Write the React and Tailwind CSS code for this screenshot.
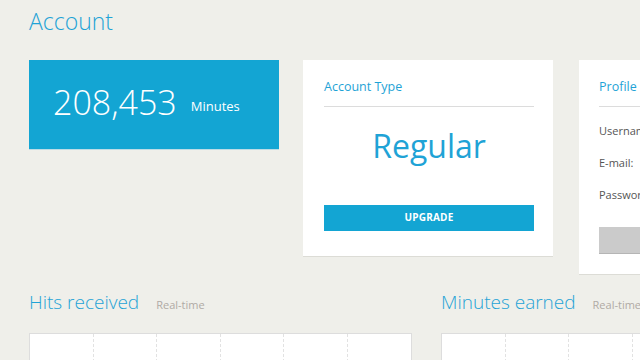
export default function App() {
  const cols = [0, 1, 2, 3, 4, 5];
  return (
    <div className="w-[640px] h-[360px] overflow-hidden bg-[#efefea] font-['Open_Sans',sans-serif]">
      <div className="w-[900px] pl-[29px]">
        <h1 className="pt-[3px] h-[60px] text-[23px] leading-[36px] font-light text-[#1fa3d6]">Account</h1>

        <div className="flex items-start">
          <div className="w-[250px] h-[89px] bg-[#13a5d3] shadow-[0_1px_0_#bcdce6] flex items-center pl-[24px] pb-[6px] text-white">
            <span className="text-[34px] font-light leading-none">208,453</span>
            <span className="ml-[14px] mt-[10px] text-[13px]">Minutes</span>
          </div>

          <div className="ml-[24px] w-[250px] bg-white shadow-[0_1px_0_#dcdcd6] pl-[21px] pr-[19px] pt-[17px] pb-[25px]">
            <div className="text-[12.5px] leading-[20px] text-[#1fa3d6] pb-[9px] border-b border-[#dcdcdc]">Account Type</div>
            <div className="text-center text-[32px] leading-[44px] text-[#1fa3d6] pt-[17px] pb-[35px]">Regular</div>
            <button className="w-full h-[26px] bg-[#13a5d3] text-white text-[10px] font-bold tracking-[0.2px]">UPGRADE</button>
          </div>

          <div className="ml-[26px] w-[250px] bg-white shadow-[0_1px_0_#dcdcd6] pl-[20px] pr-[19px] pt-[17px] pb-[21px]">
            <div className="text-[12.5px] leading-[20px] text-[#1fa3d6] pb-[9px] border-b border-[#dcdcdc]">Profile</div>
            <div className="pt-[15px] text-[11px] text-[#555] flex flex-col gap-[15px]">
              <div className="leading-[17px]">Username:</div>
              <div className="leading-[17px]">E-mail:</div>
              <div className="leading-[17px]">Password:</div>
            </div>
            <div className="mt-[24px] h-[26px] bg-[#cbcbcb] shadow-[0_1px_0_#b5b5b5]" />
          </div>
        </div>

        <div className="flex gap-[29px] mt-[9px]">
          <div className="w-[383px]">
            <div className="flex items-baseline h-[50px] pt-[5px]">
              <span className="text-[19px] font-light text-[#1fa3d6]">Hits received</span>
              <span className="ml-[17px] text-[11px] text-[#b0aaa5]">Real-time</span>
            </div>
            <div className="h-[60px] bg-white border border-[#dddddd] grid grid-cols-6">
              {cols.map((c) => (
                <div key={c} className={c < 5 ? "border-r border-dashed border-[#e2e2e2]" : ""} />
              ))}
            </div>
          </div>
          <div className="w-[383px]">
            <div className="flex items-baseline h-[50px] pt-[5px]">
              <span className="text-[19px] font-light text-[#1fa3d6]">Minutes earned</span>
              <span className="ml-[17px] text-[11px] text-[#b0aaa5]">Real-time</span>
            </div>
            <div className="h-[60px] bg-white border border-[#dddddd] grid grid-cols-6">
              {cols.map((c) => (
                <div key={c} className={c < 5 ? "border-r border-dashed border-[#e2e2e2]" : ""} />
              ))}
            </div>
          </div>
        </div>
      </div>
    </div>
  );
}
